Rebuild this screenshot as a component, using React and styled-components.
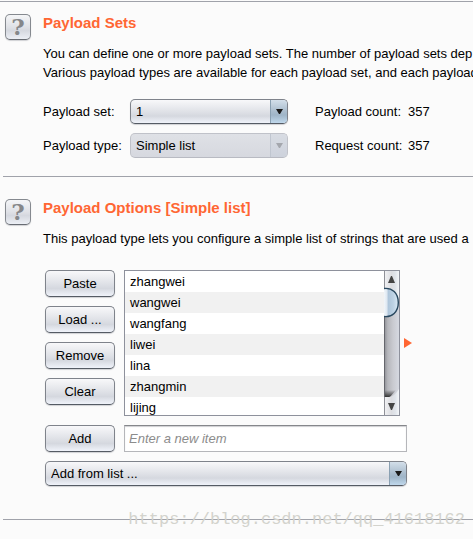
import React, { useState } from 'react';
import styled, { createGlobalStyle } from 'styled-components';

const PAYLOADS = ['zhangwei', 'wangwei', 'wangfang', 'liwei', 'lina', 'zhangmin', 'lijing'];

const SelectBox = ({ id, label, disabled, options }) => (
  <StyledSelect $disabled={disabled}>
    <select id={id} aria-label={label} disabled={disabled}>
      {options.map((option) => (
        <option key={option}>{option}</option>
      ))}
    </select>
    <span className="arrow">
      <svg width="7" height="5" viewBox="0 0 7 5" aria-hidden="true">
        <path d="M0 0h7L4 5H3z" fill={disabled ? '#a4a7ad' : '#1b1b1b'} />
      </svg>
    </span>
  </StyledSelect>
);

const ScrollBar = () => (
  <svg width="15" height="144" viewBox="0 0 15 144" aria-hidden="true">
    <defs>
      <linearGradient id="track">
        <stop offset="0" stopColor="#8b8c92" />
        <stop offset="0.25" stopColor="#b5b6bb" />
        <stop offset="0.6" stopColor="#c9cad0" />
        <stop offset="1" stopColor="#d6d9e1" />
      </linearGradient>
      <linearGradient id="cap">
        <stop offset="0" stopColor="#f3f3f5" />
        <stop offset="0.5" stopColor="#dcdde1" />
        <stop offset="0.75" stopColor="#e0e4ea" />
        <stop offset="1" stopColor="#f4f6f9" />
      </linearGradient>
      <linearGradient id="thumb">
        <stop offset="0" stopColor="#f2f6fa" />
        <stop offset="0.22" stopColor="#dce6f0" />
        <stop offset="0.28" stopColor="#aec5da" />
        <stop offset="0.65" stopColor="#bdd2e4" />
        <stop offset="1" stopColor="#dcebf7" />
      </linearGradient>
      <linearGradient id="shade" x2="0" y2="1">
        <stop offset="0" stopColor="#333" stopOpacity="0" />
        <stop offset="1" stopColor="#333" />
      </linearGradient>
    </defs>
    <rect width="15" height="144" fill="url(#track)" />
    <rect width="15" height="32" fill="url(#cap)" />
    <path d="M0 119h12L6 126H0z" fill="url(#shade)" />
    <path d="M0 126h5Q11 125 15 118V144H0z" fill="url(#cap)" />
    <path d="M0.5 0v17M0.5 126v18" stroke="#8f9097" />
    <path d="M0.5 46v80" stroke="#65666c" />
    <path d="M0 17.5C8 16.5 14.3 22 14.3 31.5S8 46.5 0 45.5z" fill="url(#thumb)" />
    <path
      d="M0 17.5C8 16.5 14.3 22 14.3 31.5S8 46.5 0 45.5"
      fill="none"
      stroke="#29485f"
      strokeWidth="1.4"
    />
    <path d="M7 5h1l3 7H4z" fill="#444" />
    <path d="M4 132h7l-3 7H7z" fill="#444" />
  </svg>
);

const PayloadSets = () => (
  <Section>
    <HelpButton aria-label="Help on payload sets">?</HelpButton>
    <Content>
      <Title>Payload Sets</Title>
      <Description>
        You can define one or more payload sets. The number of payload sets dep
        <br />
        Various payload types are available for each payload set, and each payload
      </Description>
      <Fields>
        <label htmlFor="payloadSet">Payload set:</label>
        <SelectBox id="payloadSet" options={['1']} />
        <Count>
          <span>Payload count:</span>
          <span>357</span>
        </Count>
        <label htmlFor="payloadType">Payload type:</label>
        <SelectBox id="payloadType" options={['Simple list']} disabled />
        <Count>
          <span>Request count:</span>
          <span>357</span>
        </Count>
      </Fields>
    </Content>
  </Section>
);

const PayloadOptions = () => {
  const [newItem, setNewItem] = useState('');

  return (
    <Section>
      <HelpButton aria-label="Help on payload options">?</HelpButton>
      <Content>
        <Title>Payload Options [Simple list]</Title>
        <Description>
          This payload type lets you configure a simple list of strings that are used a
        </Description>
        <Editor>
          <Row>
            <ButtonColumn>
              <Button>Paste</Button>
              <Button>Load ...</Button>
              <Button>Remove</Button>
              <Button>Clear</Button>
            </ButtonColumn>
            <ListBox>
              <ul>
                {PAYLOADS.map((payload) => (
                  <li key={payload}>{payload}</li>
                ))}
              </ul>
              <ScrollBar />
            </ListBox>
            <Marker width="8" height="10" viewBox="0 0 8 10" aria-hidden="true">
              <path d="M0 0l8 5-8 5z" fill="#ff6633" />
            </Marker>
          </Row>
          <Row>
            <Button>Add</Button>
            <ItemInput
              type="text"
              aria-label="New item"
              placeholder="Enter a new item"
              value={newItem}
              onChange={(e) => setNewItem(e.target.value)}
            />
          </Row>
          <SelectBox id="addFromList" label="Add from list" options={['Add from list ...']} />
        </Editor>
      </Content>
    </Section>
  );
};

const App = () => (
  <Page>
    <GlobalStyle />
    <PayloadSets />
    <PayloadOptions />
    <Footer>
      <Watermark>https://blog.csdn.net/qq_41618162</Watermark>
    </Footer>
  </Page>
);

const GlobalStyle = createGlobalStyle`
  * {
    box-sizing: border-box;
  }

  body {
    margin: 0;
    background-color: #fbfbfb;
    overflow: hidden;
  }

  body, button, input, select {
    font-family: 'Liberation Sans', Arial, sans-serif;
    font-size: 13px;
    color: #000;
  }
`;

const Page = styled.main`
  padding-top: 1px;
  overflow: hidden;
`;

const Section = styled.section`
  display: flex;
  gap: 12px;
  margin-left: 3px;
  padding: 12px 0 18px 2px;
  border-top: 1px solid #a0a2aa;

  &:first-of-type {
    margin-left: 0;
    padding-left: 5px;
  }

  & + & {
    padding-top: 22px;
    padding-bottom: 33px;
  }
`;

const HelpButton = styled.button`
  flex: none;
  width: 26px;
  height: 26px;
  padding: 0;
  border: 1px solid #85898f;
  border-bottom-color: #686c73;
  border-radius: 5px;
  background: linear-gradient(#f5f6f8, #dfe1e6 50%, #d5d8df 65%, #eceff5);
  box-shadow: 0 1px 1px #d0d1d4;
  color: #85878a;
  font-family: 'DejaVu Serif', serif;
  font-size: 23px;
  font-weight: bold;
  line-height: 24px;
`;

const Content = styled.div`
  flex: 1;
  min-width: 0;
`;

const Title = styled.h2`
  margin: 0;
  color: #ff6633;
  font-size: 15px;
  line-height: 18px;
`;

const Description = styled.p`
  margin: 12px 0 0;
  line-height: 19px;
  white-space: nowrap;
`;

const Fields = styled.div`
  display: grid;
  grid-template-columns: 87px 158px auto;
  row-gap: 9px;
  align-items: center;
  margin-top: 17px;
`;

const Count = styled.div`
  display: grid;
  grid-template-columns: 93px auto;
  padding-left: 27px;
`;

const StyledSelect = styled.div`
  display: flex;
  height: 25px;
  overflow: hidden;
  border: 1px solid ${({ $disabled }) => ($disabled ? '#c0c2c9' : '#7f838b')};
  border-bottom-color: ${({ $disabled }) => ($disabled ? '#b8bac2' : '#555b64')};
  border-radius: 5px;
  background: ${({ $disabled }) =>
    $disabled
      ? 'linear-gradient(#dfe1e6, #d6d8df)'
      : 'linear-gradient(#f8f8fa, #e2e4e9 45%, #d5d8df 70%, #f0f3fa)'};
  box-shadow: ${({ $disabled }) => ($disabled ? 'none' : '0 1px 1px #d0d1d4')};

  select {
    flex: 1;
    min-width: 0;
    padding: 0 5px;
    border: none;
    appearance: none;
    background: transparent;
    opacity: 1;
    color: #000;
  }

  .arrow {
    display: flex;
    flex: none;
    align-items: center;
    justify-content: center;
    width: 17px;
    border-left: 1px solid ${({ $disabled }) => ($disabled ? '#c0c6d0' : '#8aa0b2')};
    background: ${({ $disabled }) =>
      $disabled
        ? 'linear-gradient(#d8dce3, #cdd2dc)'
        : 'linear-gradient(#d3dfea, #a9bccd 50%, #9fb5c8 65%, #c0d8ec)'};
  }
`;

const Editor = styled.div`
  display: flex;
  flex-direction: column;
  gap: 9px;
  width: 364px;
  margin-top: 22px;
  padding-left: 2px;
`;

const Row = styled.div`
  display: flex;
  gap: 9px;
`;

const ButtonColumn = styled.div`
  display: flex;
  flex-direction: column;
  gap: 9px;
`;

const Button = styled.button`
  flex: none;
  width: 70px;
  height: 27px;
  padding: 0;
  border: 1px solid #7f838b;
  border-bottom-color: #555b64;
  border-radius: 5px;
  background: linear-gradient(#f8f8fa, #e2e4e9 45%, #d5d8df 70%, #f0f3fa);
  box-shadow: 0 1px 1px #d0d1d4;
`;

const ListBox = styled.div`
  display: flex;
  flex: none;
  width: 276px;
  height: 146px;
  overflow: hidden;
  border: 1px solid #8e919c;
  background-color: #fff;

  ul {
    flex: 1;
    margin: 0;
    padding: 0;
    list-style: none;
  }

  li {
    padding-left: 5px;
    line-height: 21px;
  }

  li:nth-child(even) {
    background-color: #f1f1f1;
  }
`;

const Marker = styled.svg`
  flex: none;
  align-self: center;
  margin-left: -5px;
`;

const ItemInput = styled.input`
  flex: 1;
  min-width: 0;
  height: 27px;
  padding: 0 4px;
  border: 1px solid #b5b6ba;
  border-top-color: #85878b;
  background-color: #fff;
  box-shadow: inset 0 1px 1px #cfcfd2;

  &::placeholder {
    color: #8c8c8c;
    font-style: italic;
  }
`;

const Footer = styled.footer`
  position: relative;
  height: 20px;
  margin-left: 3px;
  border-top: 1px solid #a0a2aa;
`;

// sits across the divider line
const Watermark = styled.span`
  position: absolute;
  top: -11px;
  right: 8px;
  color: #d3d3cd;
  font-family: 'Liberation Mono', monospace;
  font-size: 17px;
  line-height: 22px;
`;

export default App;
